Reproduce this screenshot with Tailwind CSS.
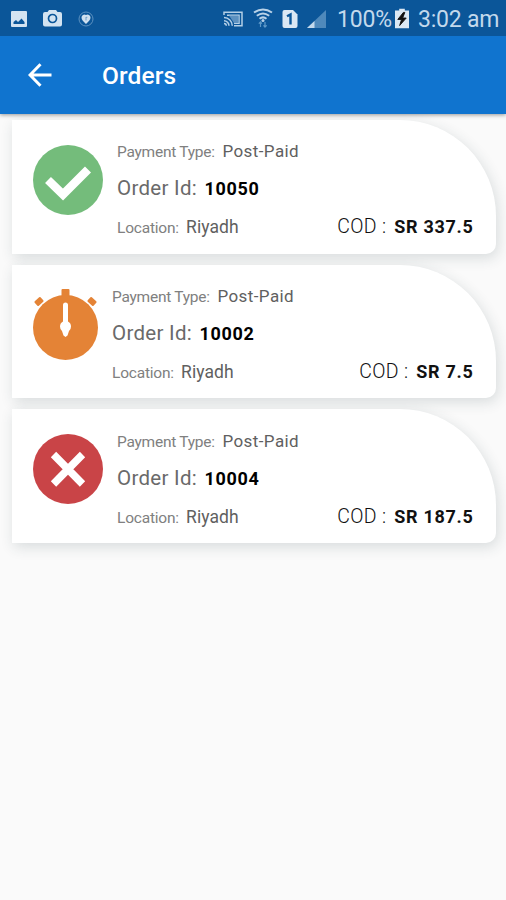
<!DOCTYPE html>
<html lang="en">
<head>
<meta charset="utf-8">
<title>Orders</title>
<script src="https://cdn.jsdelivr.net/npm/@tailwindcss/browser@4"></script>
</head>
<body class="w-[506px] h-[900px] overflow-hidden bg-[#fafafa] font-[Roboto,'Liberation_Sans',sans-serif]">
<div class="flex h-full flex-col">
  <div class="relative z-20 flex h-9 shrink-0 items-center bg-[#0b5699] text-[#c3d9ec]">
    <svg class="ml-[11px] mt-[2px] h-4 w-4" viewBox="0 0 16 16"><rect width="16" height="16" rx="1" fill="#d3e3f1"/><path d="M2.500 13V11L5 9l2 2 3.500-3.500L13.500 11v2z" fill="#0b5699"/></svg>
    <svg class="ml-4 h-[18px] w-[19px]" viewBox="0 0 19 18"><path d="M6 1h7l1.500 2H17q2 0 2 2v10.500q0 2-2 2H2q-2 0-2-2V5q0-2 2-2h2.500z" fill="#d3e3f1"/><circle cx="9.500" cy="9.500" r="4" fill="none" stroke="#0b5699" stroke-width="1.700"/></svg>
    <svg class="ml-4 mt-[2px] h-4 w-4" viewBox="0 0 16 16"><circle cx="8" cy="8" r="7" fill="none" stroke="#5c91c0" stroke-width="1"/><path d="M8 13C5.500 10.500 3.500 9 3.500 6.800A3 3 0 0 1 8 4a3 3 0 0 1 4.500 2.800C12.500 9 10.500 10.500 8 13z" fill="#cfe0ef"/><path d="M8 6v3.500M8 6.300h1.300" stroke="#6f9fc9" stroke-width="1"/></svg>
    <svg class="ml-[129px] mt-[2px] h-4 w-5" viewBox="0 0 20 16" fill="none" stroke="#b4cfe6" stroke-width="1.500"><path d="M1 4V1.200h18v13.600h-8M4 4.200h12v8h-5"/><path d="M1 6.500a8.300 8.300 0 0 1 8.300 8.300M1 9.700a5 5 0 0 1 5 5M1 12.500a2.300 2.300 0 0 1 2.300 2.300"/><path d="M6 4.500h9.500v7.500h-4.500z" fill="#5c91c0" stroke="none"/></svg>
    <svg class="ml-[10px] h-5 w-5" viewBox="0 0 20 20" fill="none"><path d="M1 4.500q9-6.200 18 0M3.800 7.800q6.200-4.600 12.400 0M6.500 10.800q3.500-2.800 7 0" stroke="#b9d2e8" stroke-width="2"/><circle cx="10" cy="12.500" r="1.500" fill="#b9d2e8"/><path d="M7.500 19v-5M5.800 15.700 7.500 14l1.300 1.700M12 14v5M10.500 17.300l1.500 1.700 1.700-1.700" stroke="#5f9ac9" stroke-width="1.200"/></svg>
    <svg class="ml-[9px] mt-[2px] h-5 w-4" viewBox="0 0 16 20"><path d="M2.500 1H11l4.500 4.500V17q0 2-2 2h-11q-2 0-2-2V3q0-2 2-2z" fill="#dbe8f4"/><path d="M5 7.300 8.500 5.500v10" fill="none" stroke="#0b5699" stroke-width="2.400"/></svg>
    <svg class="ml-[9px] mt-[2px] h-5 w-5" viewBox="0 0 20 20"><path d="M0 19 19 1v18z" fill="#4f89bb"/><path d="M0 19 7.500 12v7z" fill="#c3d9ec"/></svg>
    <div class="ml-[10px] mt-[4px] w-[55px] whitespace-nowrap text-[23px] leading-8 tracking-[-0.2px]">100%</div>
    <svg class="ml-[3px] h-[21px] w-[14px]" viewBox="0 0 15 21"><path d="M4.500 0h6v2H15v19H0V2h4.500z" fill="#dbe8f4"/><path d="M9 4 3 11.500h4L5 18l7-8H8.200L10.500 4z" fill="#111" stroke="#111"/></svg>
    <div class="ml-[9px] mt-[4px] whitespace-nowrap text-[23px] leading-8 tracking-[-0.2px]">3:02 am</div>
  </div>
  <header class="relative z-10 flex h-[78px] shrink-0 items-center bg-[#1074cf] text-white shadow-[0_1px_4px_rgba(0,0,0,0.4)]">
    <svg class="ml-7 h-6 w-6" viewBox="0 0 24 24" fill="none" stroke="#fff" stroke-width="3"><path d="M23.500 12H3M12.500 1.300 2 12l10.500 10.700"/></svg>
    <h1 class="ml-[50px] mt-[2px] text-[24.500px] font-medium leading-8 tracking-[0.1px]">Orders</h1>
  </header>
  <main class="flex flex-col gap-[11.200px] pl-3 pr-[10.500px] pt-[6px]">
    <article class="flex h-[133.500px] rounded-br-[10px] rounded-tr-[96px] bg-white pl-[21px] pr-[22px] shadow-[2px_4px_14px_rgba(40,60,70,0.16)]">
      <svg class="mt-[25px] h-[70px] w-[70px] shrink-0" viewBox="0 0 70 70"><circle cx="35" cy="35" r="35" fill="#74bc7b"/><path d="M15 35 30 49.500 55 24.500" fill="none" stroke="#fff" stroke-width="8.500"/></svg>
      <div class="ml-[14px] flex flex-1 flex-col pt-[19px] text-[#808080]">
        <div class="flex h-6 items-baseline leading-6"><span class="w-[105.500px] text-[15.500px] tracking-[-0.25px]">Payment Type:</span><span class="text-[17px] tracking-[0.4px] text-[#606060]">Post-Paid</span></div>
        <div class="mt-[11px] flex h-7 items-baseline leading-7"><span class="w-[87.500px] text-[20.500px] tracking-[0.3px] text-[#6a6a6a]">Order Id:</span><span class="text-[18px] font-bold tracking-[0.7px] text-black">10050</span></div>
        <div class="mt-[11px] flex h-7 items-baseline leading-7"><span class="w-[69px] text-[15.500px] tracking-[-0.2px]">Location:</span><span class="text-[17.500px] tracking-[0.1px] text-[#606060]">Riyadh</span><span class="ml-auto mr-[8px] text-[19.500px] font-light tracking-[0.3px] text-[#111]">COD :</span><span class="text-[18px] font-bold tracking-[0.7px] text-[#111]">SR 337.5</span></div>
      </div>
    </article>
    <article class="flex h-[133.500px] rounded-br-[10px] rounded-tr-[96px] bg-white pl-[21px] pr-[22px] shadow-[2px_4px_14px_rgba(40,60,70,0.16)]">
      <svg class="mt-[24px] h-[71px] w-[65px] shrink-0" viewBox="0 0 65 71"><g fill="#e48336"><circle cx="32.500" cy="38.500" r="32.500"/><rect x="28.500" y="0" width="8" height="8" rx="1"/><rect x="2" y="9.500" width="8" height="6" rx="1" transform="rotate(-43 6 12.500)"/><rect x="55" y="9.500" width="8" height="6" rx="1" transform="rotate(43 59 12.500)"/></g><path d="M30 16q0-2.500 2.500-2.500T35 16v16.500q3 1.500 3 5 0 3-2 4.500l-1.500 4.500-2 1.500-2-1.500L29 42q-2-1.500-2-4.500 0-3.500 3-5z" fill="#fff"/></svg>
      <div class="ml-[14px] flex flex-1 flex-col pt-[19.500px] text-[#808080]">
        <div class="flex h-6 items-baseline leading-6"><span class="w-[105.500px] text-[15.500px] tracking-[-0.25px]">Payment Type:</span><span class="text-[17px] tracking-[0.4px] text-[#606060]">Post-Paid</span></div>
        <div class="mt-[11px] flex h-7 items-baseline leading-7"><span class="w-[87.500px] text-[20.500px] tracking-[0.3px] text-[#6a6a6a]">Order Id:</span><span class="text-[18px] font-bold tracking-[0.7px] text-black">10002</span></div>
        <div class="mt-[11px] flex h-7 items-baseline leading-7"><span class="w-[69px] text-[15.500px] tracking-[-0.2px]">Location:</span><span class="text-[17.500px] tracking-[0.1px] text-[#606060]">Riyadh</span><span class="ml-auto mr-[8px] text-[19.500px] font-light tracking-[0.3px] text-[#111]">COD :</span><span class="text-[18px] font-bold tracking-[0.7px] text-[#111]">SR 7.5</span></div>
      </div>
    </article>
    <article class="flex h-[133.500px] rounded-br-[10px] rounded-tr-[96px] bg-white pl-[21px] pr-[22px] shadow-[2px_4px_14px_rgba(40,60,70,0.16)]">
      <svg class="mt-[24.500px] h-[70px] w-[70px] shrink-0" viewBox="0 0 70 70"><circle cx="35" cy="35" r="35" fill="#c94447"/><path d="M20.500 20.500 49.500 50M49.500 20.500 20.500 50" stroke="#fff" stroke-width="7.500"/></svg>
      <div class="ml-[14px] flex flex-1 flex-col pt-[19.500px] text-[#808080]">
        <div class="flex h-6 items-baseline leading-6"><span class="w-[105.500px] text-[15.500px] tracking-[-0.25px]">Payment Type:</span><span class="text-[17px] tracking-[0.4px] text-[#606060]">Post-Paid</span></div>
        <div class="mt-[11px] flex h-7 items-baseline leading-7"><span class="w-[87.500px] text-[20.500px] tracking-[0.3px] text-[#6a6a6a]">Order Id:</span><span class="text-[18px] font-bold tracking-[0.7px] text-black">10004</span></div>
        <div class="mt-[11px] flex h-7 items-baseline leading-7"><span class="w-[69px] text-[15.500px] tracking-[-0.2px]">Location:</span><span class="text-[17.500px] tracking-[0.1px] text-[#606060]">Riyadh</span><span class="ml-auto mr-[8px] text-[19.500px] font-light tracking-[0.3px] text-[#111]">COD :</span><span class="text-[18px] font-bold tracking-[0.7px] text-[#111]">SR 187.5</span></div>
      </div>
    </article>
  </main>
</div>
</body>
</html>
